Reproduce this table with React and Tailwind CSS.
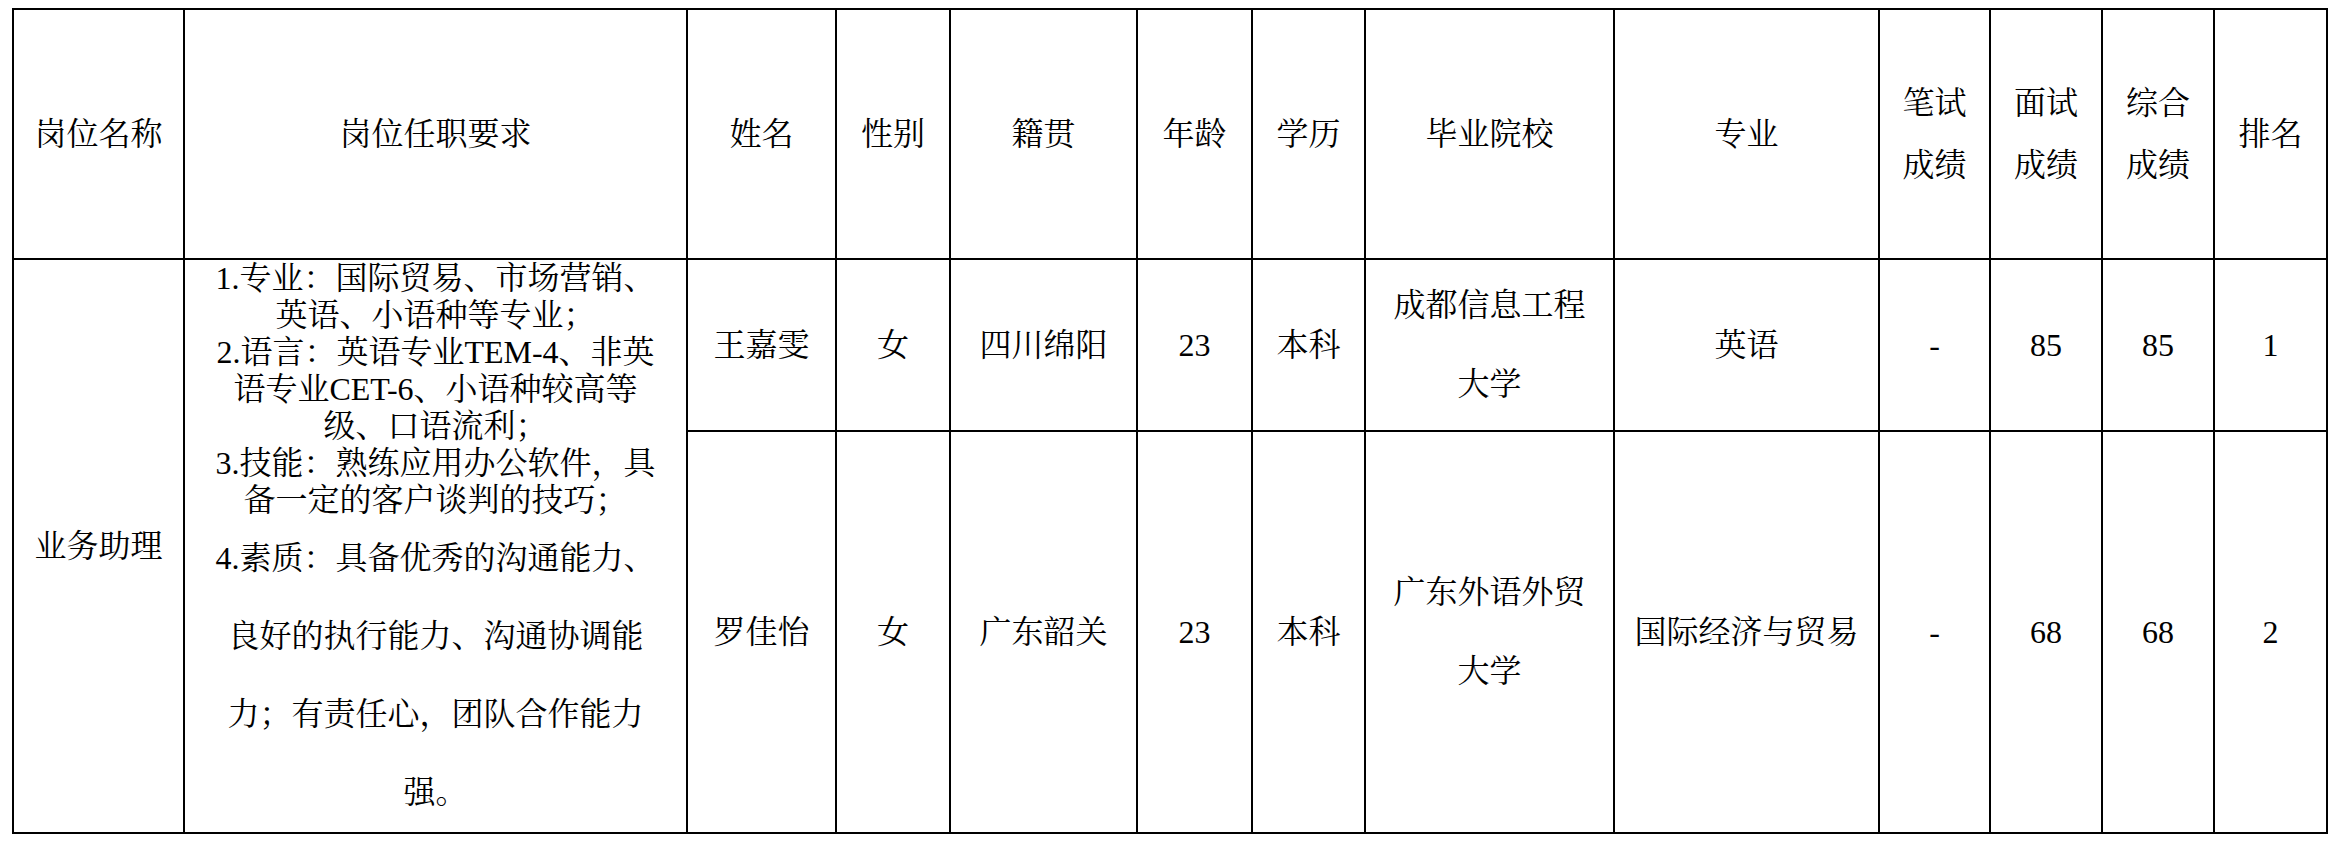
const headers = [
  ['岗位名称'],
  ['岗位任职要求'],
  ['姓名'],
  ['性别'],
  ['籍贯'],
  ['年龄'],
  ['学历'],
  ['毕业院校'],
  ['专业'],
  ['笔试', '成绩'],
  ['面试', '成绩'],
  ['综合', '成绩'],
  ['排名'],
];

const rows = [
  [['王嘉雯'], ['女'], ['四川绵阳'], ['23'], ['本科'], ['成都信息工程', '大学'], ['英语'], ['-'], ['85'], ['85'], ['1']],
  [['罗佳怡'], ['女'], ['广东韶关'], ['23'], ['本科'], ['广东外语外贸', '大学'], ['国际经济与贸易'], ['-'], ['68'], ['68'], ['2']],
];

const reqTight = [
  '1.专业：国际贸易、市场营销、',
  '英语、小语种等专业；',
  '2.语言：英语专业TEM-4、非英',
  '语专业CET-6、小语种较高等',
  '级、口语流利；',
  '3.技能：熟练应用办公软件，具',
  '备一定的客户谈判的技巧；',
];

const reqLoose = [
  '4.素质：具备优秀的沟通能力、',
  '良好的执行能力、沟通协调能',
  '力；有责任心，团队合作能力',
  '强。',
];

const cell = 'border-r-2 border-b-2 border-black flex items-center justify-center text-center';

const Lines = ({ lines, leading }) => (
  <div className={leading}>
    {lines.map((l, i) => (
      <div key={i} className="whitespace-nowrap">{l}</div>
    ))}
  </div>
);

export default function App() {
  return (
    <div className="min-h-screen bg-white pt-[8px] pl-[12px] text-black text-[32px] font-['Liberation_Serif','Noto_Serif_CJK_SC','Noto_Sans_CJK_SC',serif]">
      <div className="grid w-max grid-cols-[171px_503px_149px_114px_187px_115px_113px_249px_265px_111px_112px_112px_113px] grid-rows-[250px_172px_402px] border-l-2 border-t-2 border-black">
        {headers.map((h, i) => (
          <div key={i} className={cell}>
            <Lines lines={h} leading="leading-[62px]" />
          </div>
        ))}

        <div className={`${cell} row-span-2`}>业务助理</div>
        <div className="row-span-2 border-r-2 border-b-2 border-black flex flex-col items-center text-center">
          <Lines lines={reqTight} leading="leading-[37px]" />
          <Lines lines={reqLoose} leading="leading-[78px]" />
        </div>

        {rows.map((r, ri) =>
          r.map((c, ci) => (
            <div key={`${ri}-${ci}`} className={cell}>
              <Lines lines={c} leading="leading-[79px]" />
            </div>
          ))
        )}
      </div>
    </div>
  );
}
